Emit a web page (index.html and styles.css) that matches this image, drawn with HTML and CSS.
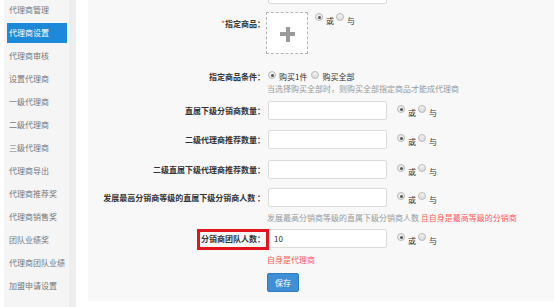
FILE: index.html
```html
<!DOCTYPE html>
<html lang="zh-CN">
<head>
<meta charset="utf-8">
<title>代理商设置</title>
<link rel="stylesheet" href="styles.css">
</head>
<body>
<div class="page">
  <div class="edge"></div>
  <nav class="side">
    <ul class="menu">
      <li>代理商管理</li>
      <li class="active">代理商设置</li>
      <li>代理商审核</li>
      <li>设置代理商</li>
      <li>一级代理商</li>
      <li>二级代理商</li>
      <li>三级代理商</li>
      <li>代理商导出</li>
      <li>代理商推荐奖</li>
      <li>代理商销售奖</li>
      <li>团队业绩奖</li>
      <li>代理商团队业绩</li>
      <li>加盟申请设置</li>
    </ul>
  </nav>
  <div class="side-border"></div>
  <div class="gutter"></div>
  <main class="panel">
    <div class="row field row-top">
      <div class="label"></div>
      <div class="ctl"><span class="input"></span></div>
    </div>

    <div class="row goods">
      <div class="label label-top"><span class="req">*</span>指定商品：</div>
      <div class="ctl ctl-top">
        <span class="upload"><span class="plus"></span></span>
        <span class="radios radios-goods"><span class="radio checked"></span><span class="rtext">或</span><span class="radio"></span><span class="rtext">与</span></span>
      </div>
    </div>

    <div class="row cond">
      <div class="label">指定商品条件：</div>
      <div class="ctl">
        <span class="radios radios-cond"><span class="radio checked"></span><span class="rtext wide">购买1件</span><span class="radio"></span><span class="rtext wide">购买全部</span></span>
      </div>
    </div>
    <div class="hint hint-cond">当选择购买全部时，则购买全部指定商品才能成代理商</div>

    <div class="row field f1">
      <div class="label">直属下级分销商数量：</div>
      <div class="ctl"><span class="input"></span>
        <span class="radios"><span class="radio checked"></span><span class="rtext">或</span><span class="radio"></span><span class="rtext">与</span></span>
      </div>
    </div>

    <div class="row field f2">
      <div class="label">二级代理商推荐数量：</div>
      <div class="ctl"><span class="input"></span>
        <span class="radios"><span class="radio checked"></span><span class="rtext">或</span><span class="radio"></span><span class="rtext">与</span></span>
      </div>
    </div>

    <div class="row field f3">
      <div class="label">二级直属下级代理商推荐数量：</div>
      <div class="ctl"><span class="input"></span>
        <span class="radios"><span class="radio checked"></span><span class="rtext">或</span><span class="radio"></span><span class="rtext">与</span></span>
      </div>
    </div>

    <div class="row field f4">
      <div class="label">发展最高分销商等级的直属下级分销商人数 ：</div>
      <div class="ctl"><span class="input"></span>
        <span class="radios"><span class="radio checked"></span><span class="rtext">或</span><span class="radio"></span><span class="rtext">与</span></span>
      </div>
    </div>
    <div class="hint hint-f4">发展最高分销商等级的直属下级分销商人数 <span class="warn">且自身是最高等级的分销商</span></div>

    <div class="row field f5">
      <div class="label marked">分销商团队人数：</div>
      <div class="ctl"><span class="input">10</span>
        <span class="radios"><span class="radio checked"></span><span class="rtext">或</span><span class="radio"></span><span class="rtext">与</span></span>
      </div>
    </div>
    <div class="hint warn warn-f5">自身是代理商</div>

    <div class="actions"><button class="btn" type="button">保存</button></div>
  </main>
</div>
</body>
</html>
```

FILE: styles.css
```css
* { box-sizing: border-box; }

html, body {
  margin: 0;
  padding: 0;
  background: #ffffff;
  overflow: hidden;
}

body {
  font-family: "Noto Sans CJK SC", "Noto Sans", sans-serif;
  font-size: 8px;
  color: #333333;
}

.page {
  display: flex;
  height: 307px;
  width: 554px;
}

.edge {
  width: 4px;
  flex: none;
  background: #ffffff;
}

.side {
  width: 65px;
  flex: none;
  background: #f5f5f5;
  padding-left: 3px;
}

.menu {
  list-style: none;
  margin: 0;
  padding: 0;
}

.menu li {
  width: 60px;
  height: 20px;
  line-height: 20px;
  margin-bottom: 3px;
  padding-left: 2px;
  color: #777777;
  font-size: 8px;
  white-space: nowrap;
}

.menu li.active {
  background: #1d8ad9;
  color: #ffffff;
}

.side-border {
  width: 7px;
  flex: none;
  background: #eeeeee;
}

.gutter {
  width: 12px;
  flex: none;
}

.panel {
  flex: 1;
  height: 301px;
  background: #f8f8f8;
  overflow: hidden;
}

.row {
  display: flex;
  align-items: center;
}

.label {
  width: 177px;
  flex: none;
  text-align: right;
  font-weight: 700;
  color: #333333;
  line-height: 10px;
  white-space: nowrap;
}

.label-top {
  align-self: flex-start;
  padding-top: 7px;
}

.req { color: #e4393c; font-weight: 400; }

.ctl {
  display: flex;
  align-items: flex-start;
  margin-left: 3px;
  height: 100%;
}

.ctl-top { align-self: flex-start; }

.field { height: 19px; }

.input {
  display: block;
  width: 119px;
  height: 19px;
  background: #ffffff;
  border: 1px solid #dcdcdc;
  border-radius: 2px;
  padding-left: 5px;
  line-height: 17px;
  font-size: 8px;
  color: #333333;
}

.radios {
  display: flex;
  align-items: flex-start;
  margin-left: 10px;
  padding-top: 4px;
}

.radio {
  display: block;
  width: 8px;
  height: 8px;
  border-radius: 50%;
  border: 1px solid #b9b9b9;
  background: linear-gradient(#f4f4f4, #dadada);
  flex: none;
  position: relative;
}

.radio.checked {
  background: #ececec;
}

.radio.checked::after {
  content: "";
  position: absolute;
  left: 1.5px;
  top: 1.5px;
  width: 3px;
  height: 3px;
  border-radius: 50%;
  background: #555555;
}

.rtext {
  display: block;
  margin: 4px 2px 0 3px;
  line-height: 8px;
  color: #333333;
}

.rtext.wide { margin-top: 2px; margin-right: 4px; }

.row-top { margin-top: -15px; }

.goods {
  margin-top: 8px;
  height: 42px;
  align-items: flex-start;
}

.upload {
  display: block;
  width: 42px;
  height: 42px;
  margin-left: -2px;
  background: #ffffff;
  border: 1px dashed #b5b5b5;
  position: relative;
}

.plus::before,
.plus::after {
  content: "";
  position: absolute;
  background: #9a9a9a;
}

.plus::before {
  left: 13px;
  top: 19px;
  width: 15px;
  height: 4px;
}

.plus::after {
  left: 18.5px;
  top: 13.5px;
  width: 4px;
  height: 15px;
}

.radios-goods { margin-left: 7px; padding-top: 1px; }

.cond {
  margin-top: 17px;
  height: 12px;
}

.radios-cond { margin-left: 0; padding-top: 0; }

.hint {
  margin-left: 179px;
  line-height: 10px;
  color: #999999;
  white-space: nowrap;
}

.hint-cond { margin-top: 1px; }

.f1 { margin-top: 7px; }
.f2 { margin-top: 10px; }
.f3 { margin-top: 11px; }
.f4 { margin-top: 9px; }

.hint-f4 { margin-top: 6px; }

.warn { color: #ff5a5a; }

.f5 { margin-top: 6px; }

.marked { position: relative; }

.marked::after {
  content: "";
  position: absolute;
  left: 109px;
  right: -4px;
  top: -5px;
  bottom: -6px;
  border: 3px solid #e2141c;
}

.warn-f5 { margin-top: 7px; }

.actions {
  margin-top: 8px;
  margin-left: 179px;
}

.btn {
  display: block;
  width: 32px;
  height: 19px;
  padding: 0;
  background: #3f8fd6;
  border: 1px solid #2f7cc0;
  border-radius: 2px;
  color: #ffffff;
  font-family: "Noto Sans CJK SC", sans-serif;
  font-size: 8px;
  line-height: 17px;
}
```
